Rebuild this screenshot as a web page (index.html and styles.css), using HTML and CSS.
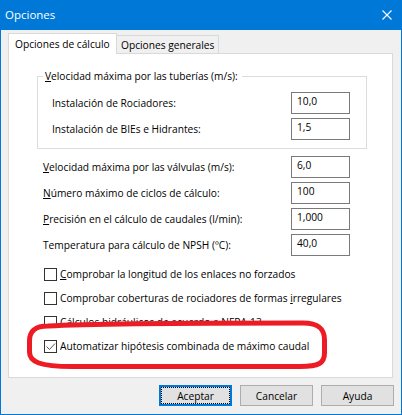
FILE: index.html
```html
<!DOCTYPE html>
<html lang="es">
<head>
<meta charset="utf-8">
<link rel="stylesheet" href="styles.css">
</head>
<body>
<div class="window">
  <div class="titlebar">
    <span class="title">Opciones</span>
    <svg class="close" width="10" height="10" viewBox="0 0 10 10"><path d="M0.5 0.5L9.5 9.5M9.5 0.5L0.5 9.5" stroke="#fff" stroke-width="1.1" fill="none"/></svg>
  </div>
  <div class="client">
    <div class="tabs">
      <div class="tab active">Opciones de cálculo</div>
      <div class="tab inactive">Opciones generales</div>
    </div>
    <div class="panel">
      <fieldset class="group">
        <legend><u>V</u>elocidad máxima por las tuberías (m/s):</legend>
        <div class="row"><span>Instalación de Rociadores:</span><span class="input">10,0</span></div>
        <div class="row"><span>Instalación de BIEs e Hidrantes:</span><span class="input">1,5</span></div>
      </fieldset>
      <div class="fields">
        <div class="row"><span><u>V</u>elocidad máxima por las válvulas (m/s):</span><span class="input">6,0</span></div>
        <div class="row"><span><u>N</u>úmero máximo de ciclos de cálculo:</span><span class="input">100</span></div>
        <div class="row"><span><u>P</u>recisión en el cálculo de caudales (l/min):</span><span class="input">1,000</span></div>
        <div class="row"><span>Temperatura para cálculo de NPSH (ºC):</span><span class="input">40,0</span></div>
      </div>
      <div class="checks">
        <div class="check"><span class="box"></span><span><u>C</u>omprobar la longitud de los enlaces no forzados</span></div>
        <div class="check"><span class="box"></span><span>Comprobar coberturas de rociadores de formas <u>i</u>rregulares</span></div>
        <div class="check"><span class="box"></span><span>Cálculos hidráulicos de acuerdo a NFPA-13</span></div>
        <div class="check front"><span class="box"><svg width="11" height="11" viewBox="0 0 11 11"><path d="M1.5 5.5L4.5 8.5L10 2.5" stroke="#555" stroke-width="1" fill="none"/></svg></span><span>Automatizar hipótesis combinada de máximo caudal</span></div>
      </div>
    </div>
    <div class="buttons">
      <div class="btn default">Aceptar</div>
      <div class="btn">Cancelar</div>
      <div class="btn">Ayuda</div>
    </div>
  </div>
  <svg class="annot" width="402" height="415" viewBox="0 0 402 415"><path d="M48 326 C90 323.5 200 323 303 323 C320 323 324.5 330 324.5 340 L324.5 353 C324.5 363 319 366.5 300 366.5 L72 366.5 C40 366.5 29.5 362 29.5 352 L29.5 341 C29.5 331 35 326 48 326 Z" fill="#fff" stroke="#ed1c24" stroke-width="5"/></svg>
</div>
</body>
</html>
```

FILE: styles.css
```css
* { box-sizing: border-box; }
html, body { margin: 0; padding: 0; }
body {
  width: 402px;
  height: 415px;
  font-family: "Open Sans", "Noto Sans", sans-serif;
  font-size: 10.2px;
  color: #000;
  background: #f0f0f0;
}
.window {
  position: relative;
  width: 402px;
  height: 415px;
  border: 1px solid #0078d7;
  border-top: none;
  display: flex;
  flex-direction: column;
  background: #f0f0f0;
}
.titlebar {
  height: 30px;
  margin: 0 -1px;
  background: #0078d7;
  color: #fff;
  display: flex;
  align-items: center;
  justify-content: space-between;
  padding: 0 10px 1px 5px;
  font-size: 11.5px;
}
.close { display: block; }
.client {
  flex: 1;
  padding: 3px 7px 0 7px;
}
.tabs {
  display: flex;
  align-items: flex-end;
  height: 20px;
}
.tab {
  border: 1px solid #d9d9d9;
  border-bottom: none;
  display: flex;
  align-items: center;
  white-space: nowrap;
}
.tab.active {
  position: relative;
  z-index: 1;
  width: 109px;
  height: 21px;
  margin-bottom: -1px;
  background: #fff;
  padding-left: 6px;
  padding-bottom: 1px;
}
.tab.inactive {
  width: 102px;
  height: 18px;
  border-left: none;
  background: #f0f0f0;
  padding-left: 4px;
}
.panel {
  width: 385px;
  height: 325px;
  background: #fff;
  border: 1px solid #d9d9d9;
}
.group {
  margin: 14px 25px 0 28px;
  padding: 8px 16px 8px 14px;
  border: 1px solid #dcdcdc;
  min-width: 0;
}
.group legend {
  margin-left: -9px;
  padding: 0 4px 0 2px;
  line-height: 16px;
}
.row {
  display: flex;
  align-items: center;
  justify-content: space-between;
  height: 22px;
}
.row + .row { margin-top: 4px; }
.input {
  width: 59px;
  height: 22px;
  border: 1px solid #7a7a7a;
  padding-left: 5px;
  line-height: 17px;
  align-self: flex-start;
}
.fields {
  margin: 7px 0 0 34px;
  width: 307px;
}
.checks {
  margin: 6px 0 0 35px;
}
.check {
  display: flex;
  align-items: center;
  height: 24px;
  white-space: nowrap;
}
.check.front { position: relative; z-index: 2; }
.box {
  width: 13px;
  height: 13px;
  border: 1px solid #333;
  margin-right: 3px;
  background: #fff;
  display: flex;
}
.box svg { display: block; }
.buttons {
  display: flex;
  justify-content: flex-end;
  gap: 8px;
  margin-top: 7px;
}
.btn {
  width: 73px;
  height: 21px;
  border: 1px solid #adadad;
  background: #e1e1e1;
  display: flex;
  align-items: center;
  justify-content: center;
}
.btn.default {
  border: 2px solid #0078d7;
  outline: 1px dotted #000;
  outline-offset: -3px;
}
.annot {
  position: absolute;
  left: -1px;
  top: 0;
  z-index: 1;
  pointer-events: none;
}
```
